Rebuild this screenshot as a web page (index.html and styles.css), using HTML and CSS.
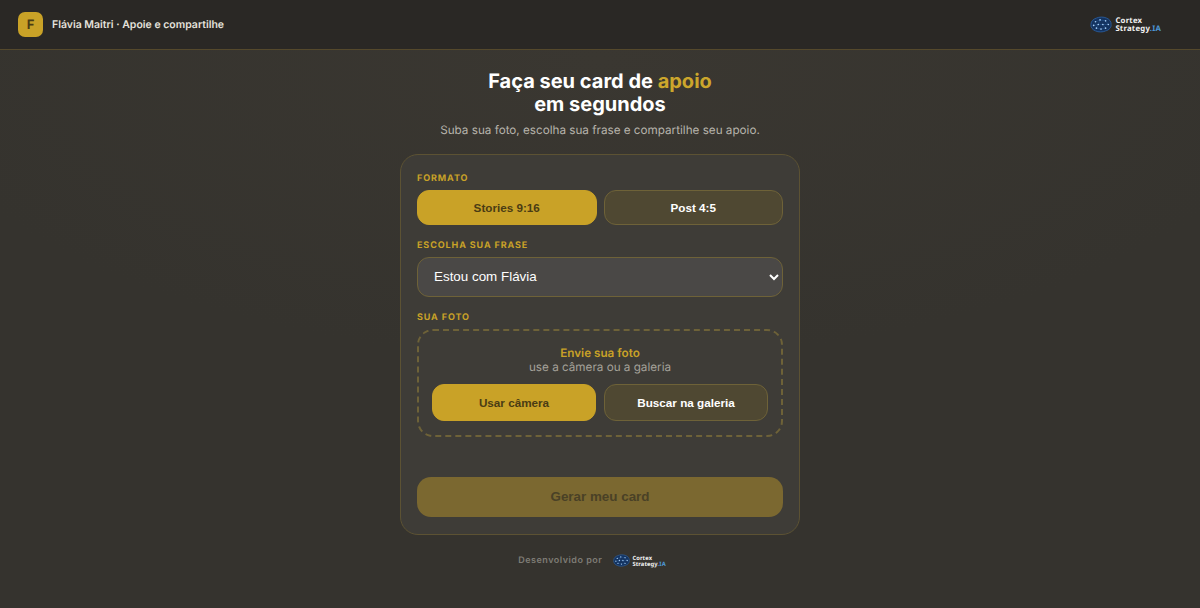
FILE: index.html
```html
<!DOCTYPE html>
<html lang="pt-BR">
<head>
<meta charset="utf-8">
<title>Flávia Maitri · Apoie e compartilhe</title>
<link rel="stylesheet" href="styles.css">
</head>
<body>
<svg class="defs" width="0" height="0" aria-hidden="true">
  <symbol id="brain" viewBox="0 0 24 18">
    <path d="M1 9C1 5 4 3 7 2C10 .5 15 .5 18 2C21 3 23.500 6 23 9C23.500 12 21 15 17 16C14 17.500 9 17.500 6 16C3 15 .5 12 1 9Z" fill="#14335f" stroke="#2f66ac" stroke-width=".8"/>
    <path d="M6 6L11 4L17 5L20 9L14 9L9 9L4 10M9 9L7 13L12 14L17 13L14 9M11 4L9 9" fill="none" stroke="#2f66ac" stroke-width=".4"/>
    <g fill="#a8d0f7">
      <circle cx="6" cy="6" r=".9"/><circle cx="11" cy="4" r=".9"/><circle cx="17" cy="5" r=".9"/>
      <circle cx="4" cy="10" r=".9"/><circle cx="9" cy="9" r=".9"/><circle cx="14" cy="9" r=".9"/>
      <circle cx="20" cy="9" r=".9"/><circle cx="7" cy="13" r=".9"/><circle cx="12" cy="14" r=".9"/>
      <circle cx="17" cy="13" r=".9"/>
    </g>
  </symbol>
</svg>
<header class="topbar">
  <div class="brand">
    <span class="brand-mark">F</span>
    <span class="brand-name">Flávia Maitri · Apoie e compartilhe</span>
  </div>
  <div class="cortex">
    <svg class="cortex-icon"><use href="#brain"/></svg>
    <span class="cortex-text">Cortex<br>Strategy<span class="ia">.IA</span></span>
  </div>
</header>
<main class="main">
  <h1 class="title">Faça seu card de <span class="accent">apoio</span><br>em segundos</h1>
  <p class="subtitle">Suba sua foto, escolha sua frase e compartilhe seu apoio.</p>
  <section class="card">
    <div class="label">FORMATO</div>
    <div class="row format-row">
      <button class="btn btn-gold">Stories 9:16</button>
      <button class="btn btn-dark">Post 4:5</button>
    </div>
    <label class="label label-gap" for="frase">ESCOLHA SUA FRASE</label>
    <select class="select" id="frase">
      <option>Estou com Flávia</option>
    </select>
    <div class="label label-gap">SUA FOTO</div>
    <div class="drop">
      <div class="drop-title">Envie sua foto</div>
      <div class="drop-sub">use a câmera ou a galeria</div>
      <div class="row drop-row">
        <button class="btn btn-gold">Usar câmera</button>
        <button class="btn btn-dark">Buscar na galeria</button>
      </div>
    </div>
    <button class="generate">Gerar meu card</button>
  </section>
  <footer class="foot">
    <span class="foot-text">Desenvolvido por</span>
    <div class="cortex cortex-small">
      <svg class="cortex-icon"><use href="#brain"/></svg>
      <span class="cortex-text">Cortex<br>Strategy<span class="ia">.IA</span></span>
    </div>
  </footer>
</main>
</body>
</html>
```

FILE: styles.css
```css
* { box-sizing: border-box; }
html, body { margin: 0; height: 100%; }
body {
  font-family: Inter, "Liberation Sans", sans-serif;
  background: radial-gradient(ellipse 700px 300px at 50% 60px, #3a3731, #35332e);
  color: #fff;
  overflow: hidden;
  text-rendering: geometricPrecision;
}
.defs { position: absolute; }
.topbar {
  height: 50px;
  display: flex;
  align-items: center;
  justify-content: space-between;
  padding: 0 39px 0 18px;
  background: #2a2825;
  border-bottom: 1px solid #55492c;
}
.brand { display: flex; align-items: center; gap: 9px; }
.brand-mark {
  width: 25px;
  height: 25px;
  border-radius: 7px;
  background: #c9a227;
  color: #4a3c14;
  font-size: 13px;
  font-weight: 700;
  display: flex;
  align-items: center;
  justify-content: center;
}
.brand-name { font-size: 10.5px; font-weight: 600; color: #e4e2dc; }
.cortex { display: flex; align-items: center; gap: 3px; }
.cortex-icon { width: 22px; height: 17px; display: block; }
.cortex-text { font-size: 7.8px; line-height: 8px; font-weight: 700; color: #f2f2f2; font-family: "Noto Sans", sans-serif; letter-spacing: .2px; }
.ia { color: #4d97d6; }
.main { display: flex; flex-direction: column; align-items: center; padding-top: 20px; }
.title { margin: 0; font-size: 20px; line-height: 23px; font-weight: 700; text-align: center; }
.accent { color: #cca62c; }
.subtitle { margin: 5px 0 0; font-size: 11.7px; line-height: 18px; color: #b7b4ac; }
.card {
  width: 400px;
  height: 381px;
  margin-top: 15px;
  padding: 18px 16px 16px;
  border: 1px solid #5c5233;
  border-radius: 18px;
  background: #3e3c37;
  display: flex;
  flex-direction: column;
}
.label { display: block; font-size: 9px; line-height: 12px; font-weight: 700; letter-spacing: .9px; color: #c9a227; }
.label-gap { margin-top: 15px; }
.row { display: grid; grid-template-columns: 1fr 1fr; }
.format-row { margin-top: 5px; gap: 7px; height: 35px; }
.btn {
  font-family: "Liberation Sans", sans-serif;
  font-size: 11.7px;
  font-weight: 700;
  border-radius: 12px;
  cursor: pointer;
}
.btn-gold { background: #c9a227; color: #4a3c14; border: 1.5px solid #c9a227; }
.btn-dark { background: #4f4832; color: #fff; border: 1.5px solid #6e6238; }
.select {
  margin-top: 5px;
  height: 40px;
  flex: none;
  width: 100%;
  padding: 0 12px 2px;
  font-family: "Liberation Sans", sans-serif;
  font-size: 13.4px;
  color: #fff;
  background: #4a4846;
  border: 1.5px solid #6e6238;
  border-radius: 12px;
}
.drop {
  margin-top: 5px;
  height: 108px;
  flex: none;
  padding: 15px 13px 0;
  border: 2px dashed #6e6238;
  border-radius: 16px;
  text-align: center;
}
.drop-title { font-size: 11.7px; line-height: 14px; font-weight: 600; color: #c9a227; }
.drop-sub { font-size: 11.7px; line-height: 14px; color: #a5a29a; }
.drop-row { margin-top: 10px; gap: 8px; height: 37px; }
.generate {
  margin-top: 40px;
  height: 40px;
  flex: none;
  width: 100%;
  padding: 0 0 2px;
  font-family: "Liberation Sans", sans-serif;
  font-size: 13.4px;
  font-weight: 700;
  color: #4a4126;
  background: #7b6830;
  border: 0;
  border-radius: 14px;
}
.foot { display: flex; align-items: center; gap: 11px; margin-top: 19px; padding-right: 16px; }
.foot-text { font-size: 9px; font-weight: 600; letter-spacing: .5px; color: #7e7c75; }
.cortex-small .cortex-icon { width: 17px; height: 13px; }
.cortex-small .cortex-text { font-size: 5.8px; line-height: 6px; letter-spacing: .1px; }
.cortex-small { gap: 2px; }
```
